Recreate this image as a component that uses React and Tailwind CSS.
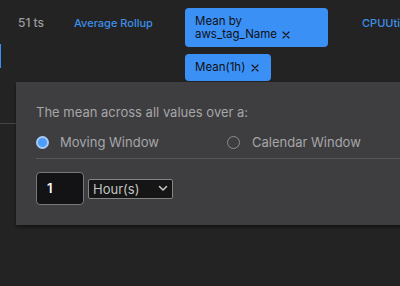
export default function App() {
  return (
    <div className="relative w-[400px] h-[286px] overflow-hidden bg-[#232323] font-[Inter,'Noto_Sans',sans-serif]">
      {/* background row */}
      <div className="flex items-start h-[124px] border-b border-[#454545] pt-[8px]">
        <div className="w-px shrink-0">
          <div className="mt-[36px] h-[24px] w-px bg-[#3b90f6]" />
        </div>
        <div className="ml-[17px] w-[56px] shrink-0 mt-[7px] text-[12px] leading-[15px] text-[#9b9b9b] font-medium">51 ts</div>
        <div className="w-[111px] shrink-0 mt-[8px] text-[11px] leading-[14px] text-[#3d8fe8] font-medium">Average Rollup</div>
        <div className="w-[177px] shrink-0 flex flex-col items-start gap-[7px]">
          <div className="w-[143px] h-[39px] rounded-[4px] bg-[#3b90f6] px-[10px] pt-[7px] text-[11.5px] leading-[13px] text-[#111]">
            <div>Mean by</div>
            <div className="flex items-center gap-[5px]">
              <span>aws_tag_Name</span>
              <svg width="8" height="8" viewBox="0 0 8 8" className="mt-px">
                <path d="M1 1L7 7M7 1L1 7" stroke="#111" strokeWidth="1.1" strokeLinecap="round" />
              </svg>
            </div>
          </div>
          <div className="w-[86px] h-[27px] rounded-[4px] bg-[#3b90f6] px-[10px] flex items-center gap-[6px] text-[11.5px] leading-[13px] text-[#111]">
            <span>Mean(1h)</span>
            <svg width="8" height="8" viewBox="0 0 8 8">
              <path d="M1 1L7 7M7 1L1 7" stroke="#111" strokeWidth="1.1" strokeLinecap="round" />
            </svg>
          </div>
        </div>
        <div className="shrink-0 mt-[8px] text-[11px] leading-[14px] text-[#3d8fe8] font-medium whitespace-nowrap">CPUUtilization</div>
      </div>

      {/* popover */}
      <div className="absolute left-[16px] top-[82px] w-[400px] h-[143px] bg-[#3e3d40] shadow-[0_2px_3px_rgba(0,0,0,0.45)] pl-[20px] pt-[22px]">
        <div className="text-[13px] leading-[16px] text-[#a6a6a8]">The mean across all values over a:</div>
        <div className="mt-[14px] h-[16px] flex items-center">
          <div className="w-[191px] shrink-0 flex items-center">
            <div className="w-[13px] h-[13px] rounded-full border-2 border-[#a8cbf6] bg-[#4d9cf7]" />
            <span className="ml-[11px] text-[13px] leading-[16px] text-[#a6a6a8]">Moving Window</span>
          </div>
          <div className="flex items-center">
            <div className="w-[13px] h-[13px] rounded-full border-[1.5px] border-[#8c8b8e]" />
            <span className="ml-[12px] text-[13px] leading-[16px] text-[#a6a6a8]">Calendar Window</span>
          </div>
        </div>
        <div className="mt-[8px] h-px bg-[#58575b]" />
        <div className="mt-[13px] flex items-center gap-[4px]">
          <div className="w-[48px] h-[33px] rounded-[4px] border border-[#78777b] bg-[#131315] pl-[10px] flex items-center text-[13px] font-semibold text-white">1</div>
          <div className="w-[85px] h-[20px] rounded-[2px] border border-[#858487] bg-[#151515] pl-[4px] pr-[4px] flex items-center justify-between text-[13px] leading-[16px] text-[#c4c4c4]">
            <span>Hour(s)</span>
            <svg width="10" height="7" viewBox="0 0 10 7">
              <path d="M1.5 1.5L5 5L8.5 1.5" stroke="#c4c4c4" strokeWidth="1.6" fill="none" strokeLinecap="round" strokeLinejoin="round" />
            </svg>
          </div>
        </div>
      </div>
    </div>
  );
}
